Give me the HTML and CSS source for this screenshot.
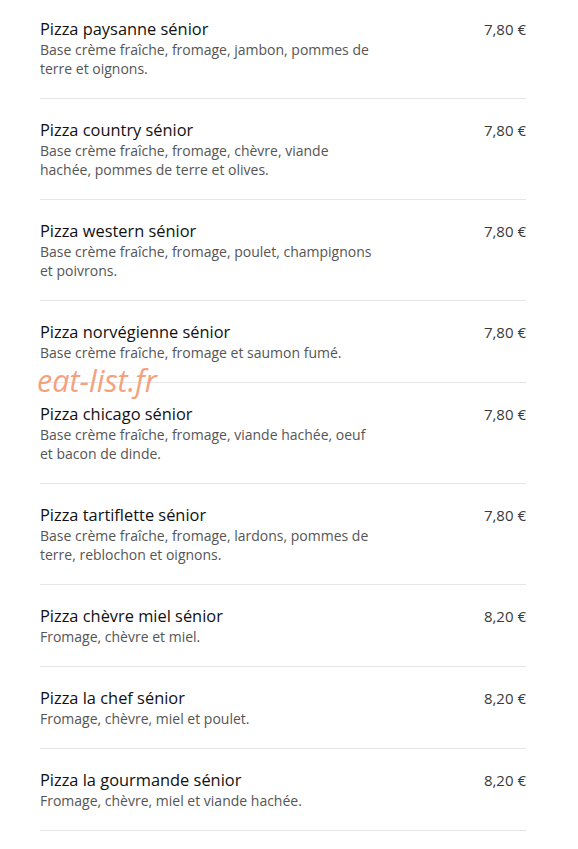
FILE: index.html
```html
<!DOCTYPE html>
<html lang="fr">
<head>
    <meta charset="UTF-8">
    <meta name="viewport" content="width=device-width, initial-scale=1.0">
    <title>Pizzas sénior</title>
    <link rel="stylesheet" href="styles.css">
</head>
<body>
    <div class="menu">
        <div class="item">
            <div class="info">
                <h3>Pizza paysanne sénior</h3>
                <p>Base crème fraîche, fromage, jambon, pommes de terre et oignons.</p>
            </div>
            <span class="price">7,80 €</span>
        </div>
        <div class="item">
            <div class="info">
                <h3>Pizza country sénior</h3>
                <p>Base crème fraîche, fromage, chèvre, viande hachée, pommes de terre et olives.</p>
            </div>
            <span class="price">7,80 €</span>
        </div>
        <div class="item">
            <div class="info">
                <h3>Pizza western sénior</h3>
                <p>Base crème fraîche, fromage, poulet, champignons et poivrons.</p>
            </div>
            <span class="price">7,80 €</span>
        </div>
        <div class="item">
            <div class="info">
                <h3>Pizza norvégienne sénior</h3>
                <p>Base crème fraîche, fromage et saumon fumé.</p>
            </div>
            <span class="price">7,80 €</span>
            <span class="watermark">eat-list.fr</span>
        </div>
        <div class="item">
            <div class="info">
                <h3>Pizza chicago sénior</h3>
                <p>Base crème fraîche, fromage, viande hachée, oeuf et bacon de dinde.</p>
            </div>
            <span class="price">7,80 €</span>
        </div>
        <div class="item">
            <div class="info">
                <h3>Pizza tartiflette sénior</h3>
                <p>Base crème fraîche, fromage, lardons, pommes de terre, reblochon et oignons.</p>
            </div>
            <span class="price">7,80 €</span>
        </div>
        <div class="item">
            <div class="info">
                <h3>Pizza chèvre miel sénior</h3>
                <p>Fromage, chèvre et miel.</p>
            </div>
            <span class="price">8,20 €</span>
        </div>
        <div class="item">
            <div class="info">
                <h3>Pizza la chef sénior</h3>
                <p>Fromage, chèvre, miel et poulet.</p>
            </div>
            <span class="price">8,20 €</span>
        </div>
        <div class="item">
            <div class="info">
                <h3>Pizza la gourmande sénior</h3>
                <p>Fromage, chèvre, miel et viande hachée.</p>
            </div>
            <span class="price">8,20 €</span>
        </div>
    </div>
</body>
</html>
```

FILE: styles.css
```css
body {
    font-family: "Open Sans", "Liberation Sans", sans-serif;
    background-color: #fff;
    margin: 0;
}
.menu {
    margin: -2px 52px 0 40px;
}
.item {
    position: relative;
    display: flex;
    justify-content: space-between;
    align-items: flex-start;
    padding: 20px 0;
    border-bottom: 1px solid #e6e6e6;
}
.info {
    max-width: 340px;
}
h3 {
    margin: 0;
    font-size: 16.4px;
    font-weight: 400;
    line-height: 22px;
    color: #111;
}
p {
    margin: 0;
    font-size: 14px;
    line-height: 19px;
    color: #555;
}
.price {
    font-size: 15px;
    font-weight: 400;
    line-height: 22px;
    color: #3a3a3a;
}
.watermark {
    position: absolute;
    left: -3px;
    top: 64px;
    font-size: 30.5px;
    line-height: 30px;
    font-style: italic;
    color: #f4a27e;
}
```
